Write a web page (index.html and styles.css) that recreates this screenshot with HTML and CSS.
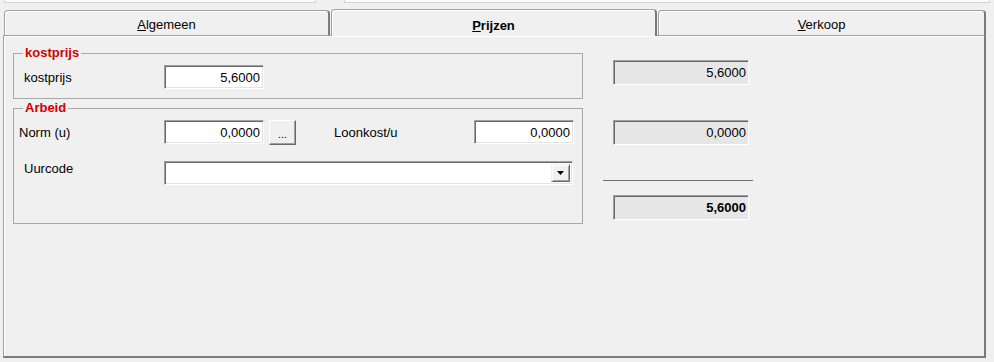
FILE: index.html
```html
<!DOCTYPE html>
<html lang="nl">
<head>
  <meta charset="UTF-8">
  <title>Prijzen</title>
  <link rel="stylesheet" href="styles.css">
</head>
<body>
  <div class="topbar">
    <div class="top-left"></div>
    <div class="top-right"></div>
  </div>

  <div class="tabs">
    <div class="tab"><u>A</u>lgemeen</div>
    <div class="tab active"><u>P</u>rijzen</div>
    <div class="tab last"><u>V</u>erkoop</div>
  </div>

  <div class="panel">
    <div class="col-left">
      <fieldset class="group">
        <legend>kostprijs</legend>
        <div class="row">
          <label class="lbl indent">kostprijs</label>
          <input class="field" type="text" value="5,6000">
        </div>
      </fieldset>

      <fieldset class="group arbeid">
        <legend>Arbeid</legend>
        <div class="row">
          <label class="lbl">Norm (u)</label>
          <input class="field" type="text" value="0,0000">
          <button class="dots">...</button>
          <label class="lbl loon">Loonkost/u</label>
          <input class="field" type="text" value="0,0000">
        </div>
        <div class="row top">
          <label class="lbl indent">Uurcode</label>
          <div class="combo">
            <span class="drop">
              <svg width="7" height="4" viewBox="0 0 7 4"><path d="M0 0h7L3.5 4z" fill="#000"/></svg>
            </span>
          </div>
        </div>
      </fieldset>
    </div>

    <div class="col-right">
      <div class="ro">5,6000</div>
      <div class="ro second">0,0000</div>
      <div class="sep"></div>
      <div class="ro total">5,6000</div>
    </div>
  </div>
</body>
</html>
```

FILE: styles.css
```css
body {
  margin: 0;
  width: 994px;
  height: 362px;
  overflow: hidden;
  background: #f0f0f0;
  font: 13px "Liberation Sans", Arial, sans-serif;
  color: #000;
}

/* remains of the control above */
.topbar {
  display: flex;
  gap: 28px;
  height: 3px;
  padding: 0 4px;
}
.topbar div {
  border: 1px solid #d4d4d4;
  border-top: none;
  background: #fbfbfb;
}
.top-left {
  width: 310px;
}
.top-right {
  flex: 1;
}

/* tabs */
.tabs {
  display: flex;
  gap: 1px;
  height: 25px;
  margin: 7px 0 0 4px;
}
.tab {
  width: 326px;
  box-sizing: border-box;
  padding-top: 6px;
  line-height: 15px;
  text-align: center;
  background: #f0f0f0;
  border: 1px solid #a0a0a0;
  border-bottom: none;
  border-right: 2px solid #7a7a7a;
  border-radius: 4px 4px 0 0;
  box-shadow: inset 1px 1px #fff;
}
.tab.last {
  width: 328px;
}
.tab.active {
  position: relative;
  z-index: 1;
  height: 27px;
  margin-top: -1px;
  padding-top: 8px;
  font-weight: bold;
}

/* tab page */
.panel {
  display: flex;
  width: 983px;
  height: 323px;
  box-sizing: border-box;
  margin-left: 3px;
  padding: 10px 0 0 9px;
  border-top: 1px solid #a0a0a0;
  border-left: 1px solid #a0a0a0;
  border-right: 2px solid #7a7a7a;
  border-bottom: 2px solid #7a7a7a;
  box-shadow: inset 1px 1px #fff;
}
.col-left {
  width: 570px;
}
.group {
  margin: 0;
  padding: 5px 0 9px 5px;
  border: 1px solid #a9a9a9;
  min-width: 0;
}
.group legend {
  margin-left: 4px;
  padding: 0 2px;
  line-height: 14px;
  color: #d40000;
  font-weight: bold;
}
.arbeid {
  margin-top: 2px;
  padding-bottom: 38px;
}
.row {
  display: flex;
  align-items: center;
  height: 24px;
}
.row.top {
  align-items: flex-start;
  margin-top: 17px;
  line-height: 15px;
}
.lbl {
  width: 145px;
  flex-shrink: 0;
}
.lbl.indent {
  width: 140px;
  margin-left: 5px;
}
.lbl.loon {
  width: 140px;
  margin-left: 38px;
}

.field {
  width: 100px;
  height: 24px;
  box-sizing: border-box;
  margin: 0;
  padding: 0 3px 0 0;
  font: inherit;
  text-align: right;
  background: #fff;
  border: 1px solid;
  border-color: #a0a0a0 #fff #fff #a0a0a0;
  box-shadow: inset 1px 1px #696969, inset -1px -1px #e3e3e3;
  outline: none;
}
.dots {
  width: 27px;
  height: 25px;
  margin: 0 0 0 5px;
  padding: 4px 0 0;
  font: inherit;
  font-size: 11px;
  background: #f0f0f0;
  border: 1px solid;
  border-color: #fff #696969 #696969 #fff;
  box-shadow: inset -1px -1px #a0a0a0;
}
.combo {
  display: flex;
  justify-content: flex-end;
  width: 409px;
  height: 24px;
  box-sizing: border-box;
  padding: 2px;
  background: #fff;
  border: 1px solid;
  border-color: #a0a0a0 #fff #fff #a0a0a0;
  box-shadow: inset 1px 1px #696969, inset -1px -1px #e3e3e3;
}
.drop {
  display: flex;
  align-items: center;
  justify-content: center;
  width: 19px;
  box-sizing: border-box;
  background: #f0f0f0;
  border: 1px solid;
  border-color: #f0f0f0 #696969 #696969 #f0f0f0;
  box-shadow: inset 1px 1px #fff, inset -1px -1px #a0a0a0;
}

/* totals on the right */
.col-right {
  margin-left: 20px;
  padding-top: 14px;
  width: 150px;
}
.ro {
  width: 136px;
  height: 25px;
  box-sizing: border-box;
  margin-left: 10px;
  padding-right: 2px;
  line-height: 23px;
  text-align: right;
  background: #e6e6e6;
  border: 1px solid;
  border-color: #a0a0a0 #fff #fff #a0a0a0;
  box-shadow: inset 1px 1px #696969;
}
.ro.second {
  margin-top: 35px;
}
.ro.total {
  margin-top: 14px;
  font-weight: bold;
}
.sep {
  margin-top: 35px;
  border-top: 1px solid #707070;
}
```
